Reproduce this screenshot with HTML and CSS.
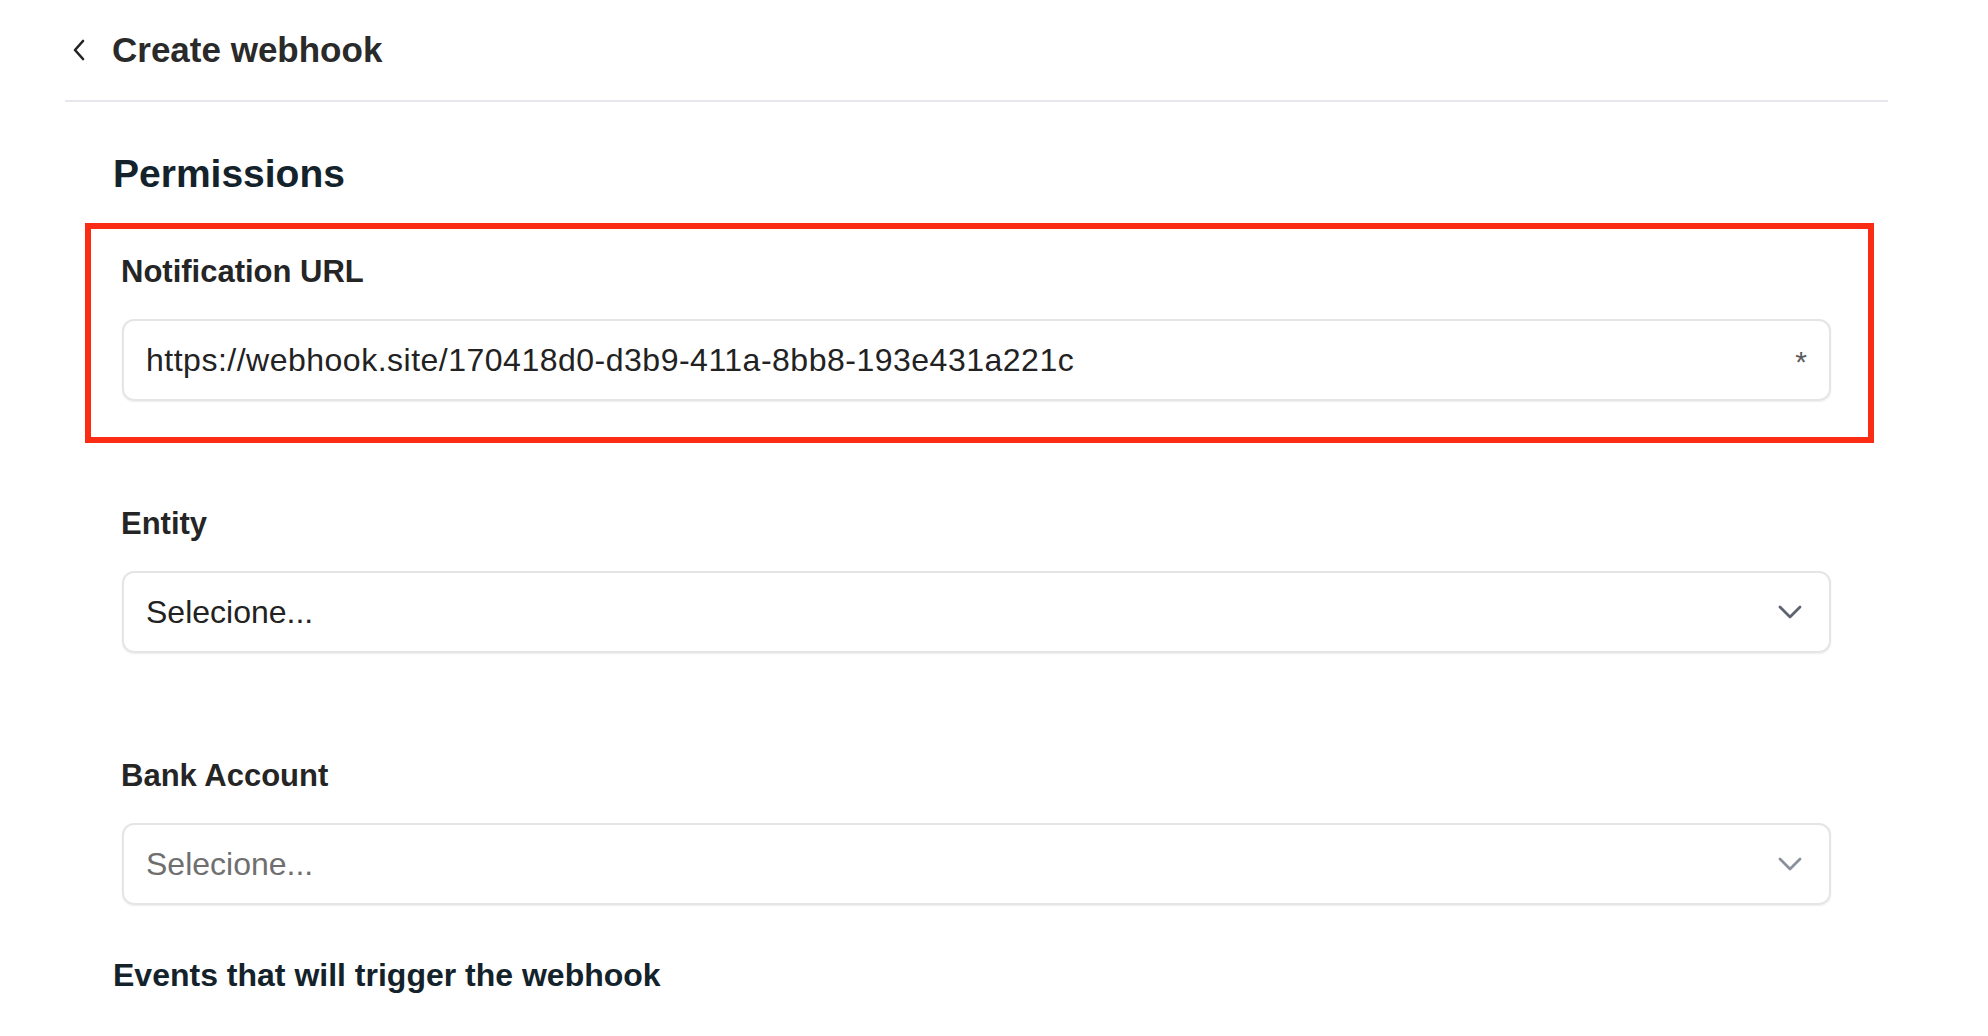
FILE: index.html
```html
<!DOCTYPE html>
<html lang="en">
<head>
<meta charset="UTF-8" />
<meta name="viewport" content="width=device-width, initial-scale=1.0"/>
<title>Create webhook</title>
<link rel="stylesheet" href="styles.css">
</head>
<body>
<header class="topbar">
  <svg class="back" width="14" height="22" viewBox="0 0 14 22">
    <polyline points="11,2 3,11 11,20" fill="none" stroke="#222" stroke-width="2.6" stroke-linecap="round" stroke-linejoin="round"/>
  </svg>
  <h1>Create webhook</h1>
</header>

<main class="content">
  <h2 class="section-title">Permissions</h2>

  <div class="field highlight">
    <label>Notification URL</label>
    <div class="input">
      <span class="value url">https://webhook.site/170418d0-d3b9-411a-8bb8-193e431a221c</span>
      <span class="required">*</span>
    </div>
  </div>

  <div class="field">
    <label>Entity</label>
    <div class="input">
      <span class="value">Selecione...</span>
      <svg class="caret" width="26" height="16" viewBox="0 0 26 16">
        <polyline points="3,3 13,13 23,3" fill="none" stroke="#5d6470" stroke-width="2.8" stroke-linecap="round" stroke-linejoin="round"/>
      </svg>
    </div>
  </div>

  <div class="field">
    <label>Bank Account</label>
    <div class="input">
      <span class="value placeholder">Selecione...</span>
      <svg class="caret" width="26" height="16" viewBox="0 0 26 16">
        <polyline points="3,3 13,13 23,3" fill="none" stroke="#8b919b" stroke-width="2.8" stroke-linecap="round" stroke-linejoin="round"/>
      </svg>
    </div>
  </div>

  <h3 class="events-title">Events that will trigger the webhook</h3>
</main>
</body>
</html>
```

FILE: styles.css
```css
body {
  font-family: "Liberation Sans", Arial, sans-serif;
  background: #fff;
  margin: 0;
  padding: 0;
}

.topbar {
  display: flex;
  align-items: center;
  gap: 26px;
  height: 100px;
  margin: 0 100px 0 65px;
  padding-left: 7px;
  border-bottom: 2px solid #e6e6ec;
  line-height: 40px;
}

.topbar h1 {
  margin: 0;
  font-size: 35px;
  font-weight: 700;
  color: #2a2a2a;
}

.back {
  display: block;
}

.content {
  margin-left: 85px;
  width: 1789px;
}

.section-title {
  margin: 50px 0 27px 28px;
  font-size: 39px;
  line-height: 44px;
  font-weight: 700;
  color: #14232b;
}

.field {
  border: 6px solid transparent;
  padding: 25px 37px 36px 31px;
}

.field + .field {
  margin-top: 32px;
}

.field.highlight {
  border-color: #fb2c14;
}

.field label {
  display: block;
  margin: 0 0 29px -1px;
  font-size: 31px;
  line-height: 36px;
  font-weight: 700;
  color: #252525;
}

.input {
  display: flex;
  align-items: center;
  height: 78px;
  padding: 0 22px;
  border: 2px solid #e5e5e5;
  border-radius: 12px;
  box-shadow: 0 1px 2px rgba(0, 0, 0, 0.07);
  font-size: 32px;
  line-height: 40px;
  color: #222;
}

.input .value {
  flex: 1;
}

.url {
  letter-spacing: 0.5px;
}

.placeholder {
  color: #6f6f6f;
}

.required {
  padding-top: 4px;
  font-size: 30px;
  line-height: 30px;
  color: #5c5c5c;
}

.caret {
  display: block;
  margin-right: 4px;
}

.events-title {
  margin: 10px 0 0 28px;
  font-size: 32px;
  line-height: 36px;
  font-weight: 700;
  color: #14232b;
}
```
